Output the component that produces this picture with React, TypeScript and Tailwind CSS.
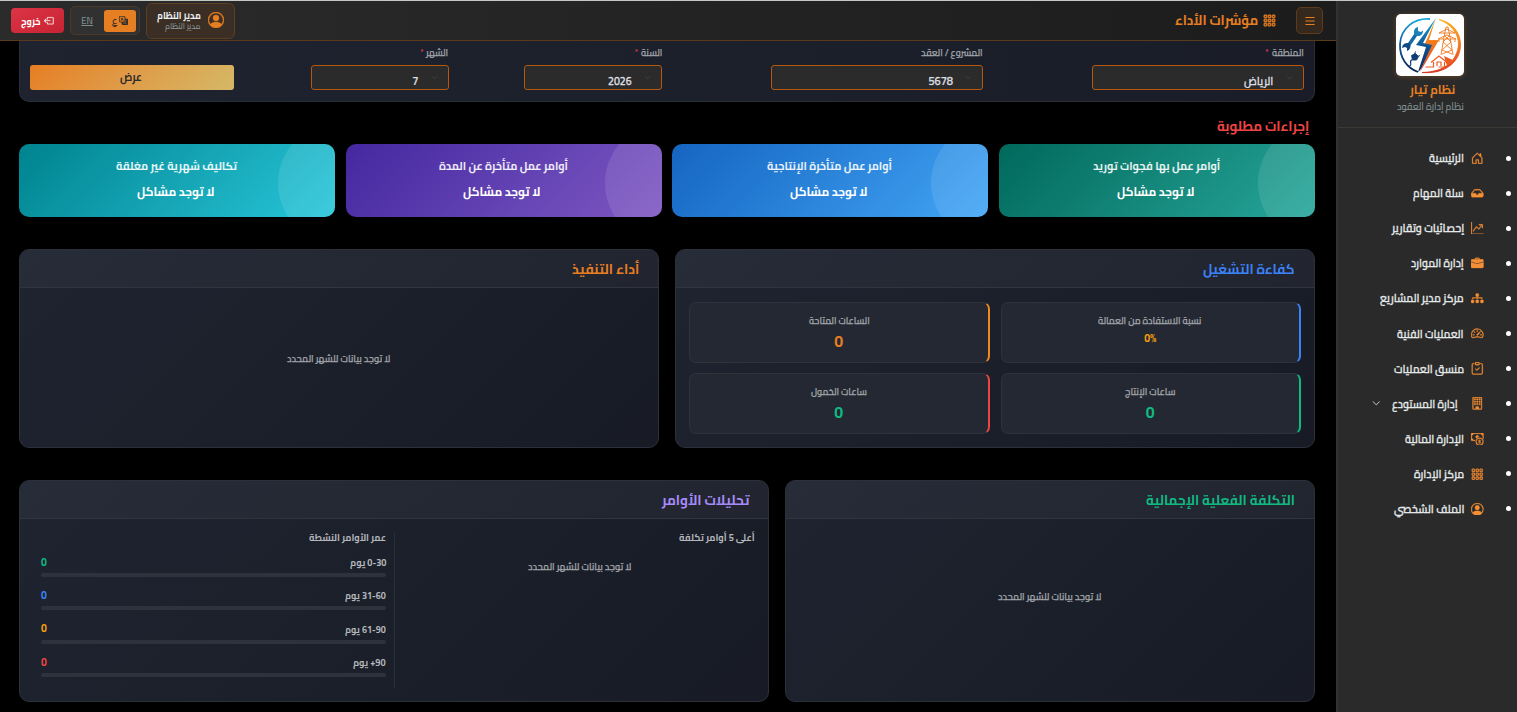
import { useLayoutEffect, useRef, useState } from "react";
import {
  BsBoxArrowLeft,
  BsBriefcaseFill,
  BsBuilding,
  BsCashCoin,
  BsChevronDown,
  BsClipboardCheck,
  BsDiagram3Fill,
  BsGraphUpArrow,
  BsGrid3X3Gap,
  BsHouseDoor,
  BsInboxFill,
  BsList,
  BsPersonCircle,
  BsSpeedometer2,
  BsTranslate,
} from "react-icons/bs";

/* Single-line label squeezed or stretched to an exact width. */
function Fit({ w, className = "", children }: { w: number; className?: string; children: string }) {
  const ref = useRef<HTMLSpanElement>(null);
  const [scale, setScale] = useState(1);
  useLayoutEffect(() => {
    if (ref.current) setScale(w / ref.current.offsetWidth);
  }, [w]);
  return (
    <span className={`block shrink-0 whitespace-nowrap ${className}`} style={{ width: w }}>
      <span ref={ref} className="inline-block origin-right" style={{ transform: `scaleX(${scale})` }}>
        {children}
      </span>
    </span>
  );
}

function Logo() {
  return (
    <svg viewBox="0 0 68 62" className="h-[62px] w-[68px] rounded-[5px] bg-white shadow-[0_1px_5px_rgba(230,126,34,0.3)]" fill="none">
      <defs>
        <linearGradient id="cool" x1="0" y1="0" x2="0" y2="1">
          <stop offset="0" stopColor="#19a5dc" />
          <stop offset="0.55" stopColor="#10508f" />
          <stop offset="1" stopColor="#0d2350" />
        </linearGradient>
        <linearGradient id="warm" x1="0" y1="0" x2="0" y2="1">
          <stop offset="0" stopColor="#fbb016" />
          <stop offset="0.6" stopColor="#f26a21" />
          <stop offset="1" stopColor="#d5341c" />
        </linearGradient>
      </defs>
      <path d="M34 5C18 4 5 14 4 30C3.500 44 11 54 22 58" stroke="url(#cool)" strokeWidth="1.800" />
      <path d="M43 5.500C56 8 64.500 18 64.500 31C64.500 47 50 60.500 26 58.500C50 58 61 46 62.500 31C63 20 55 10 43 5.500Z" fill="url(#warm)" stroke="url(#warm)" strokeWidth="0.900" />
      <path d="M40 4L33 26L43 26L24 58L34 34L28 32Z" fill="url(#warm)" />
      <path d="M40 4L20 31L30 33L22 58L25 55L36 31L27 29Z" fill="url(#cool)" />
      <path d="M12 32L21 19" stroke="#146aa6" strokeWidth="3.400" />
      <path d="M27 16.500a5 5 0 0 1-8 4.500a5 5 0 0 1 3-8l0 4l3 1z" fill="#1a83bd" />
      <path d="M6 34a5 5 0 0 1 8-4a5 5 0 0 1-3 7l0-3l-2-1z" fill="#104a87" />
      <path d="M15.500 41.500l4-2l3 3l-2 3.500l-4 0zM18.500 40l1-2.500M21.500 42.500l2.500-1" fill="#0f3c74" stroke="#0f3c74" strokeWidth="0.900" />
      <path d="M16.500 45.500c-5 2 1 4-3 7" stroke="#0f3c74" strokeWidth="1.200" />
      <g stroke="#ee7b22" strokeWidth="0.900">
        <path d="M50 13L48 23L45 41M52 13L54 23L57 41M50 13h2M43 19L51 15L59 19M42 25L51 21L60 25M43 19h16M42 25h18M43 25v3M59 25v3" />
        <path d="M48 21l7 7l-9 8l10 4M54 21l-7 7l9 8l-10 4" />
      </g>
      <g stroke="#ee5a20" strokeWidth="1.200">
        <path d="M35 48.500L43 42L51 48.500M37.500 48v5h-8M48.500 48v5h-6M41 52v-4h4v4" />
        <path d="M48 42l11 5l-8 5z" fill="#ee5a20" stroke="none" />
      </g>
    </svg>
  );
}

const menu = [
  { icon: BsHouseDoor, label: "الرئيسية", w: 35 },
  { icon: BsInboxFill, label: "سلة المهام", w: 51 },
  { icon: BsGraphUpArrow, label: "إحصائيات وتقارير", w: 72 },
  { icon: BsBriefcaseFill, label: "إدارة الموارد", w: 53 },
  { icon: BsDiagram3Fill, label: "مركز مدير المشاريع", w: 84 },
  { icon: BsSpeedometer2, label: "العمليات الفنية", w: 67 },
  { icon: BsClipboardCheck, label: "منسق العمليات", w: 70 },
  { icon: BsBuilding, label: "إدارة المستودع", w: 66, sub: true },
  { icon: BsCashCoin, label: "الإدارة المالية", w: 59 },
  { icon: BsGrid3X3Gap, label: "مركز الإدارة", w: 50 },
  { icon: BsPersonCircle, label: "الملف الشخصي", w: 70 },
];

function Sidebar() {
  return (
    <aside className="flex w-[181px] shrink-0 flex-col border-l-2 border-[#333231] bg-[#2a2a2a]">
      <div className="flex h-[127px] flex-col items-center border-b border-[#3d3a35] pt-[13px] pl-[5px]">
        <Logo />
        <Fit w={45} className="mt-[6px] ml-[6px] h-4 text-[12.500px] leading-4 font-bold text-[#e67e22]">نظام تيار</Fit>
        <Fit w={67} className="h-4 text-[10.500px] leading-4 font-medium text-[#7f8c8d] [-webkit-text-stroke:0.15px]">نظام إدارة العقود</Fit>
      </div>
      <ul className="flex flex-col pt-[12.500px]">
        {menu.map(({ icon: Icon, label, w, sub }) => (
          <li key={label} className="flex h-[35.100px] items-center pr-[6.500px]">
            <span className="size-[5px] rounded-full bg-white" />
            <Icon className="mr-[22px] size-[12.500px] text-[#f58f35]" strokeWidth={0.4} />
            <Fit w={w} className={`h-5 text-[11.500px] leading-5 font-semibold text-[#e4e8e9] [-webkit-text-stroke:0.3px] ${sub ? "mr-[13px]" : "mr-[7px]"}`}>{label}</Fit>
            {sub && <BsChevronDown className="mr-[12px] size-[8.500px] text-[#d5d9da]" strokeWidth={0.4} />}
          </li>
        ))}
      </ul>
    </aside>
  );
}

function Header() {
  return (
    <header className="flex h-10 shrink-0 items-center border-b border-[#5a3a1c] bg-linear-to-l from-[#1c1c1c] to-[#2b2b2b] pr-[13px] pl-[11px]">
      <button className="flex size-[27px] items-center justify-center rounded-[5px] border border-[#5e3b1c] bg-[#35281d] text-[#e67e22]">
        <BsList className="size-[14px]" />
      </button>
      <BsGrid3X3Gap className="mr-5 mb-px size-[13px] text-[#e67e22]" strokeWidth={0.6} />
      <Fit w={83} className="mr-[5px] mb-0.5 h-6 text-[14px] leading-6 font-bold text-[#e67e22]">مؤشرات الأداء</Fit>
      <div className="mr-auto flex items-center">
        <div className="flex h-9 w-[89px] items-center rounded-md border border-[#5e3f22] bg-[#3a2e25] pr-[10px] pb-px">
          <BsPersonCircle className="size-4 text-[#e67e22]" strokeWidth={0.4} />
          <div className="mr-[7px] flex flex-col">
            <Fit w={44} className="h-[12px] text-[10.500px] leading-[12px] font-bold text-[#ecf0f1]">مدير النظام</Fit>
            <Fit w={36} className="h-[10px] text-[8.500px] leading-[10px] font-medium text-[#8b9798]">مدير النظام</Fit>
          </div>
        </div>
        <div className="mr-[6px] flex h-[29px] w-[70px] items-center rounded-[5px] border border-[#4b3a2b] bg-[#313131] pr-[3px]">
          <div className="flex h-[22px] w-8 items-center justify-center gap-0.5 rounded-[3px] bg-[#e67e22] text-[#33302c]">
            <BsTranslate className="size-[9px]" strokeWidth={0.4} />
            <span className="text-[10px] leading-4 font-semibold underline">ع</span>
          </div>
          <span className="mr-[11px] text-[9.500px] leading-4 font-medium text-[#7f8c8d] underline">EN</span>
        </div>
        <button className="mr-[6px] flex h-[25px] w-[53px] items-center justify-center gap-1 rounded-[4px] bg-linear-to-br from-[#dc3545] to-[#c82333] text-white">
          <BsBoxArrowLeft className="size-[9.500px]" strokeWidth={0.4} />
          <Fit w={19} className="h-4 text-[10.500px] leading-4 font-bold">خروج</Fit>
        </button>
      </div>
    </header>
  );
}

function Field({ label, lw, value, vw, required = true, box }: { label: string; lw: number; value: string; vw: number; required?: boolean; box: string }) {
  return (
    <div className={`shrink-0 ${box}`}>
      <div className="flex h-4 items-center gap-[3px]">
        <Fit w={lw} className="h-4 text-[9.500px] leading-4 font-semibold text-[#9fa2a8] [-webkit-text-stroke:0.25px]">{label}</Fit>
        {required && <span className="h-4 text-[8px] leading-[15px] font-bold text-[#dc3545]">*</span>}
      </div>
      <div className="mt-1 flex h-[25px] items-start rounded-[3px] border border-[#b8580f] bg-[#2b2b2b] pt-1 pr-[10px]">
        <BsChevronDown className="mt-1 size-[7px] text-[#45494c]" />
        <Fit w={vw} className="mt-0.5 mr-[12px] h-[18px] text-[11px] leading-[18px] font-semibold text-[#dcdfe0] [-webkit-text-stroke:0.3px]">{value}</Fit>
      </div>
    </div>
  );
}

const alerts = [
  { title: "أوامر عمل بها فجوات توريد", w: 127, bg: "from-[#00695c] to-[#26a69a]" },
  { title: "أوامر عمل متأخرة الإنتاجية", w: 125, bg: "from-[#1565c0] to-[#42a5f5]" },
  { title: "أوامر عمل متأخرة عن المدة", w: 129, bg: "from-[#4527a0] to-[#7e57c2]" },
  { title: "تكاليف شهرية غير مغلقة", w: 121, bg: "from-[#00838f] to-[#26c6da]" },
];

const tiles = [
  { label: "نسبة الاستفادة من العمالة", w: 103, value: "0%", color: "border-r-[#3b82f6]", small: true, text: "text-[#f59e0b]" },
  { label: "الساعات المتاحة", w: 61, value: "0", color: "border-r-[#f08a1f]", text: "text-[#e67e22]" },
  { label: "ساعات الإنتاج", w: 50, value: "0", color: "border-r-[#10b981]", text: "text-[#10b981]" },
  { label: "ساعات الخمول", w: 56, value: "0", color: "border-r-[#ef4444]", text: "text-[#10b981]" },
];

const ages = [
  { label: "0-30 يوم", w: 36, color: "text-[#10b981]" },
  { label: "31-60 يوم", w: 41, color: "text-[#3b82f6]" },
  { label: "61-90 يوم", w: 41, color: "text-[#f59e0b]" },
  { label: "90+ يوم", w: 33, color: "text-[#ef4444]" },
];

function Panel({ title, w, color, box, children }: { title: string; w: number; color: string; box: string; children: React.ReactNode }) {
  return (
    <section className={`flex shrink-0 flex-col overflow-hidden rounded-[10px] border border-[#2b303a] bg-linear-135 from-[#1e2430] to-[#181b25] ${box}`}>
      <div className="flex h-[38px] shrink-0 items-center border-b border-[#31353e] bg-white/4 pr-[19px]">
        <Fit w={w} className={`h-6 text-[14px] leading-6 font-bold ${color}`}>{title}</Fit>
      </div>
      {children}
    </section>
  );
}

function Empty() {
  return <Fit w={103} className="h-4 text-[9.500px] leading-4 font-semibold text-[#a0a3a8] [-webkit-text-stroke:0.25px]">لا توجد بيانات للشهر المحدد</Fit>;
}

export default function App() {
  return (
    <div dir="rtl" className="flex h-[712px] w-[1517px] overflow-hidden border-t border-[#c5c9c5] bg-black font-['Cairo','Open_Sans','DejaVu_Sans_Condensed','DejaVu_Sans',sans-serif]">
      <Sidebar />
      <div className="flex w-[1336px] flex-col">
        <Header />
        <main className="flex flex-col pr-[21px] pl-[19px]">
          <div className="flex h-[61px] rounded-b-[10px] border border-t-0 border-[#282d37] bg-linear-to-l from-[#1a1d27] to-[#1e232f] pr-[10.500px] pl-[10px] pt-1">
            <Field label="المنطقة" lw={32} value="الرياض" vw={29} box="w-[212px]" />
            <Field label="المشروع / العقد" lw={62} value="5678" vw={25} required={false} box="mr-[108.500px] w-[212px]" />
            <Field label="السنة" lw={21} value="2026" vw={24} box="mr-[109px] w-[138px]" />
            <Field label="الشهر" lw={22} value="7" vw={6} box="mr-[75.500px] w-[138px]" />
            <button className="mt-5 mr-auto flex h-[25px] w-[204px] items-center justify-center rounded-[3px] bg-linear-135 from-[#e67e22] to-[#d4b866] pr-[3px] text-[#2b2b2b]">
              <Fit w={22} className="h-5 text-[11.500px] leading-[18px] font-bold">عرض</Fit>
            </button>
          </div>

          <Fit w={92} className="mt-[12px] mr-[6px] h-6 text-[14px] leading-6 font-bold text-[#ef4444]">إجراءات مطلوبة</Fit>
          <div className="mt-[6px] grid h-[73px] grid-cols-4 gap-[10.670px]">
            {alerts.map((a) => (
              <div key={a.title} className={`relative flex flex-col items-center overflow-hidden rounded-[10px] bg-linear-135 pt-[12px] pr-px text-white ${a.bg}`}>
                <span className="absolute top-[-22px] right-[-65px] size-[122px] rounded-full bg-white/10" />
                <Fit w={a.w} className="h-5 text-[11.500px] leading-5 font-bold text-white/90">{a.title}</Fit>
                <Fit w={77} className="mt-[6px] mr-[2px] h-5 text-[12.500px] leading-5 font-bold">لا توجد مشاكل</Fit>
              </div>
            ))}
          </div>

          <div className="mt-8 flex h-[199px] justify-between">
            <Panel title="كفاءة التشغيل" w={92} color="text-[#3b82f6]" box="w-[640px]">
              <div className="grid grid-cols-2 gap-x-[11px] gap-y-[10px] px-[13px] pt-[13.500px]">
                {tiles.map((t) => (
                  <div key={t.label} className={`flex h-[61px] flex-col items-center rounded-[7px] border border-r-2 border-[#2d323b] bg-[#242832] pt-[10px] ${t.color}`}>
                    <Fit w={t.w} className="h-4 text-[9.500px] leading-4 font-semibold text-[#a0a3a8] [-webkit-text-stroke:0.25px]">{t.label}</Fit>
                    {t.small ? (
                      <span dir="ltr" className={`mt-px h-4 text-[10.500px] leading-4 font-bold ${t.text}`}>{t.value}</span>
                    ) : (
                      <span className={`mt-[2px] h-5 text-[16px] leading-5 font-bold ${t.text}`}>{t.value}</span>
                    )}
                  </div>
                ))}
              </div>
            </Panel>
            <Panel title="أداء التنفيذ" w={67} color="text-[#e67e22]" box="w-[640px]">
              <div className="flex flex-1 items-center justify-center pr-px pb-[18px]"><Empty /></div>
            </Panel>
          </div>

          <div className="mt-8 flex h-[222px] justify-between">
            <Panel title="التكلفة الفعلية الإجمالية" w={149} color="text-[#10b981]" box="w-[530px]">
              <div className="flex flex-1 items-center justify-center pr-px pb-[26px]"><Empty /></div>
            </Panel>
            <Panel title="تحليلات الأوامر" w={87} color="text-[#a78bfa]" box="w-[750px]">
              <div className="flex flex-1 pt-[14px] pr-[13px] pb-[13px] pl-[21px]">
                <div className="w-[361px] border-l border-[#2b2f39]">
                  <Fit w={76} className="-mt-[3px] h-4 text-[9.500px] leading-4 font-bold text-[#b4b7bb]">أعلى 5 أوامر تكلفة</Fit>
                  <div className="mt-[13px] flex justify-center pl-[10px]"><Empty /></div>
                </div>
                <div className="flex-1 pr-2">
                  <Fit w={77} className="-mt-[3px] h-4 text-[9.500px] leading-4 font-bold text-[#b4b7bb]">عمر الأوامر النشطة</Fit>
                  {ages.map((a) => (
                    <div key={a.label} className="h-[33.400px] pt-[7px]">
                      <div className="flex h-[20px] items-start justify-between">
                        <Fit w={a.w} className="mt-[2px] h-4 text-[9.500px] leading-4 font-bold text-[#b4b7bb]">{a.label}</Fit>
                        <span className={`mt-[0.500px] h-4 text-[10.500px] leading-4 font-bold ${a.color}`}>0</span>
                      </div>
                      <div className="h-1 rounded-full bg-[#2e323c]" />
                    </div>
                  ))}
                </div>
              </div>
            </Panel>
          </div>
        </main>
      </div>
    </div>
  );
}
